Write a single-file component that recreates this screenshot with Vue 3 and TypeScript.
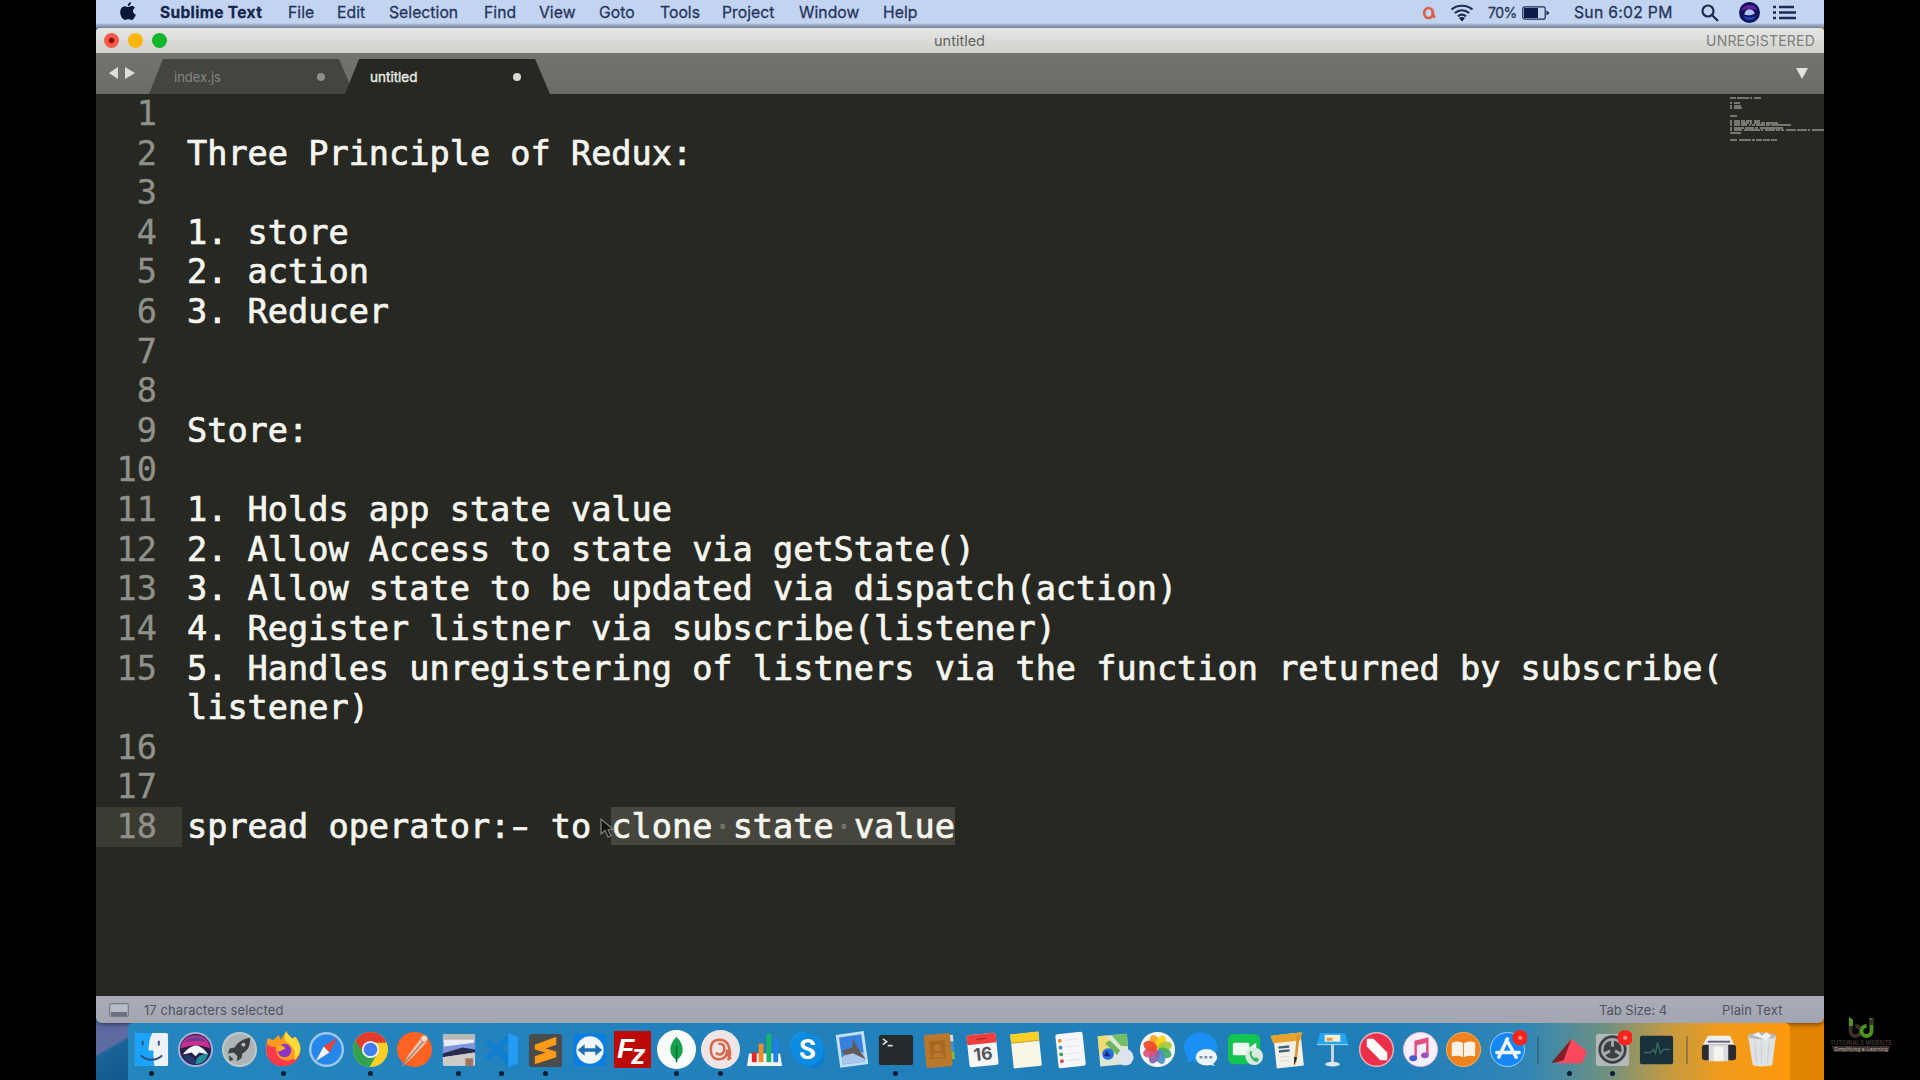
<script setup lang="ts">
interface MenuItem { label: string; width: number; gap: number }
interface DockIcon { name: string; art: string; running?: boolean; dividerAfter?: boolean }

const menu: MenuItem[] = [
  { label: 'File', width: 27, gap: 22 },
  { label: 'Edit', width: 30, gap: 22 },
  { label: 'Selection', width: 73, gap: 22 },
  { label: 'Find', width: 33, gap: 22 },
  { label: 'View', width: 38, gap: 22 },
  { label: 'Goto', width: 39, gap: 22 },
  { label: 'Tools', width: 40, gap: 22 },
  { label: 'Project', width: 55, gap: 22 },
  { label: 'Window', width: 63, gap: 21 },
  { label: 'Help', width: 37, gap: 0 },
]

const rows: { no: string; text: string }[] = [
  { no: '1', text: '' },
  { no: '2', text: 'Three Principle of Redux:' },
  { no: '3', text: '' },
  { no: '4', text: '1. store' },
  { no: '5', text: '2. action' },
  { no: '6', text: '3. Reducer' },
  { no: '7', text: '' },
  { no: '8', text: '' },
  { no: '9', text: 'Store:' },
  { no: '10', text: '' },
  { no: '11', text: '1. Holds app state value' },
  { no: '12', text: '2. Allow Access to state via getState()' },
  { no: '13', text: '3. Allow state to be updated via dispatch(action)' },
  { no: '14', text: '4. Register listner via subscribe(listener)' },
  { no: '15', text: '5. Handles unregistering of listners via the function returned by subscribe(' },
  { no: '', text: 'listener)' },
  { no: '16', text: '' },
  { no: '17', text: '' },
]
const mapRows: string[][] = [...rows.map(r => r.text), 'spread operator:- to clone state value'].map(t => t.split(' '))

const petals = ['#f9a51a', '#f7d417', '#a4c93a', '#3fae6b', '#4a90c9', '#8a63a9', '#d9527c', '#ee4b2b']
  .map((c, i) => `<ellipse cx="20" cy="12" rx="5" ry="7.5" fill="${c}" opacity=".92" transform="rotate(${i * 45 - 20} 20 20)"/>`)
  .join('')

const badge = '<circle cx="33" cy="8" r="8" fill="#f8251c"/><circle cx="33" cy="8" r="2.2" fill="#ff8d84"/>'

const dock: DockIcon[] = [
  { name: 'Finder', running: true, art: '<rect x="3" y="3" width="34" height="34" rx="2" fill="#eef1f6"/><path d="M5 3h16c-3 5-4 11-4 18h5c0 6 0 11 1 16H5a2 2 0 0 1-2-2V5a2 2 0 0 1 2-2z" fill="#1ba3fb"/><path d="M11 11v5M27.500 11v5" stroke="#35567c" stroke-width="2"/><path d="M9 26c6 6 16 6 22 0" fill="none" stroke="#2a4f7c" stroke-width="2"/>' },
  { name: 'Siri', art: '<circle cx="20" cy="20" r="18" fill="#9fb0da"/><circle cx="20" cy="20" r="16" fill="#2b1d45"/><path d="M5 19C6 1 34 1 35 19c-9-4-20-4-30 0z" fill="#c72f8c"/><path d="M9 12c5-6 17-6 22 0-6-1-16-1-22 0z" fill="#6b3a94"/><path d="M7 25c4-5 9-9 14-9 5 1 9 5 12 9l-9-2-4 4-4-4z" fill="#eefcff"/><path d="M20 35c0-6 3-10 13-11-1 6-6 11-13 11z" fill="#1b8f9b"/><path d="M20 35c0-6-3-10-13-10 2 6 6 10 13 10z" fill="#243a6b"/>' },
  { name: 'Launchpad', art: '<circle cx="20" cy="20" r="18" fill="#c2c8ca"/><circle cx="20" cy="20" r="16" fill="#adb4b5"/><path d="M31 8c-8 1-13 5-16 10l-5 1-2 5 6-1 4 4-1 5 5-3 1-5c6-3 8-8 8-16z" fill="#3b3f44"/><circle cx="24" cy="15" r="2" fill="#b9c0c5"/><path d="M9 26l5 4-4 2z" fill="#3b3f44"/>' },
  { name: 'Firefox', running: true, art: '<path d="M4 8c2 2 4 2 6 2l5-5 2 5 6-9c1 4 4 5 6 8l3-2c4 5 6 10 5 15-2 9-9 15-17 15S3 30 2 22c0-5 1-10 2-14z" fill="#ff9a1f"/><path d="M3 14C0 30 10 38 20 37c8 0 15-5 17-13-5 6-11 8-16 7-8-2-9-9-9-14-3 1-6 0-9-3z" fill="#fb3b4c"/><path d="M23 1c1 4 4 5 6 8l3-2c4 5 6 10 5 15-1 4-3 7-6 9 2-9-1-15-8-19-3-3-2-7 0-11z" fill="#ffdb3a"/><circle cx="21" cy="21" r="7" fill="#8a35c4"/><path d="M12 17c4-3 9-1 10 2l-6 3c-3 0-4-2-4-5z" fill="#ffad26"/>' },
  { name: 'Safari', art: '<circle cx="20" cy="20" r="18" fill="#9cc6f2"/><circle cx="20" cy="20" r="15.5" fill="#2787e8"/><path d="M31 8L17 17l6 6z" fill="#f14338"/><path d="M9 32l8-15 6 6z" fill="#f2f4f5"/>' },
  { name: 'Chrome', running: true, art: '<circle cx="20" cy="20" r="18" fill="#fdcf25"/><path d="M4.4 11A18 18 0 0 1 35.6 11L36 13H20L12 24z" fill="#e33b2e"/><path d="M4.4 11A18 18 0 0 0 19 38l8-14-14 0z" fill="#31a350"/><circle cx="20" cy="20" r="8.8" fill="#f2f3ee"/><circle cx="20" cy="20" r="7" fill="#3f7df0"/>' },
  { name: 'Postman', art: '<circle cx="20" cy="20" r="18" fill="#ff6221"/><path d="M7 38l7-13L27 8l6 4-14 15z" fill="#efc3aa"/><path d="M8 36l21-24" stroke="#a8735b" stroke-width="1.3"/><circle cx="30" cy="9" r="3.500" fill="#f5d9ca" stroke="#c98666"/>' },
  { name: 'Scanner', running: true, art: '<rect x="4" y="4" width="33" height="33" rx="2" fill="#c8cbd6"/><path d="M4 4h33v7H4z" fill="#b7b9b4"/><path d="M4 12l33-2v10L4 24z" fill="#7f98dc"/><path d="M5 10h31v3L5 17z" fill="#e9edf7"/><path d="M4 24l20-6 13 2v3L4 28z" fill="#272d50"/><path d="M4 28l32-5v13H4z" fill="#cfcbc6"/><path d="M27 29h8v8h-8z" fill="#a07562"/>' },
  { name: 'Visual Studio Code', running: true, art: '<path d="M27 3l10 4v27l-10 4L15 25l-8 6-4-3 8-8-8-7 4-3 8 6zM28 12l-7 8 7 8z" fill="#117fd0"/><path d="M27 3l10 4v27l-10 4z" fill="#259cf4"/>' },
  { name: 'Sublime Text', running: true, art: '<rect x="3" y="4" width="34" height="34" rx="3" fill="#4a4b4b"/><path d="M9 15l22-8v8l-11 4 11 3v6L9 35v-8l11-4-11-3z" fill="#fd9a16"/>' },
  { name: 'TeamViewer', art: '<rect x="4" y="4" width="33" height="33" rx="3" fill="#087de4"/><circle cx="20.500" cy="20.500" r="14" fill="#f2f7fc"/><path d="M8 20.500l7-6v4.300h11v-4.300l7 6-7 6v-4.300H15v4.300z" fill="#1f6db5"/>' },
  { name: 'FileZilla', art: '<rect x="1" y="1" width="38" height="38" rx="1" fill="#bd0a07"/><text x="4" y="29" font-size="29" font-weight="bold" font-style="italic" font-family="Liberation Sans, sans-serif" fill="#fff">F<tspan dx="-3" dy="6">z</tspan></text>' },
  { name: 'MongoDB Compass', running: true, art: '<circle cx="20" cy="20" r="20" fill="#fafcfb"/><path d="M20 7c9 9 8 19 0 24-8-5-9-15 0-24z" fill="#14a04c"/><path d="M20 16v17" stroke="#0a6b35" stroke-width="1.600"/>' },
  { name: 'Recorder', running: true, art: '<circle cx="20" cy="20" r="20" fill="#eee5e6"/><path d="M16 24c5 3 8-1 8-5 0-3-2-5-5-5M28 30c2-3 2-7 1-11-1-6-5-9-10-9-6 0-9 4-9 10s3 10 8 10c6 0 9-4 9-10 0 4 1 7 3 9" fill="none" stroke="#d9694e" stroke-width="2.600" stroke-linecap="round"/>' },
  { name: 'Numbers', art: '<path d="M4 24h32l2 13H2z" fill="#f3f3fa"/><path d="M7 23h5v10H7z" fill="#e9262a"/><path d="M14 14h5v19h-5z" fill="#ef8d26"/><path d="M22 4h5v29h-5z" fill="#18b56b"/><path d="M29 9h5v24h-5z" fill="#1b83e8"/>' },
  { name: 'Skype', art: '<circle cx="15" cy="15" r="13" fill="#0d92e8"/><circle cx="25" cy="26" r="13" fill="#087bd4"/><circle cx="20" cy="20" r="16.500" fill="#0d8be2"/><text x="20" y="30" text-anchor="middle" font-size="28" font-weight="bold" font-family="Roboto, sans-serif" fill="#fff">S</text>' },
  { name: 'Mail', art: '<g transform="rotate(-8 20 20)"><rect x="6" y="3" width="29" height="34" fill="#bfe0f7"/><rect x="9" y="6" width="23" height="28" fill="#3780dd"/><path d="M9 27c8-6 15-6 23-2v9H9z" fill="#a8c6ea"/><path d="M10 20l11-2 2-9 3 9 7 14-12-8-8 1z" fill="#635b57"/></g>' },
  { name: 'Terminal', running: true, art: '<rect x="3" y="5" width="35" height="31" rx="2" fill="#252a2d"/><path d="M7 9l4 3-4 3M12 16h5" fill="none" stroke="#d9dcdc" stroke-width="1.600"/>' },
  { name: 'Contacts', art: '<g transform="rotate(-5 20 20)"><path d="M31 6h4v7h-4z" fill="#d5dbe0"/><path d="M31 14h4v8h-4z" fill="#4a8ed0"/><path d="M31 23h4v8h-4z" fill="#86b640"/><rect x="5" y="4" width="27" height="34" rx="2" fill="#b9772c"/><path d="M10 11h16v18H10z" fill="#a9671f"/><circle cx="18" cy="18" r="3.500" fill="#b47933"/><path d="M12 28c0-6 12-6 12 0z" fill="#b47933"/></g>' },
  { name: 'Calendar', art: '<g transform="rotate(-6 20 20)"><rect x="5" y="4" width="30" height="33" rx="2" fill="#f6f6f6"/><path d="M7 4h26a2 2 0 0 1 2 2v8H5V6a2 2 0 0 1 2-2z" fill="#ee3f3c"/><path d="M15 9h10" stroke="#b92828" stroke-width="1.500"/><text x="20" y="31" text-anchor="middle" font-size="18" font-weight="bold" font-family="Inter, sans-serif" fill="#53565a">16</text></g>' },
  { name: 'Notes', art: '<g transform="rotate(-6 20 20)"><rect x="5" y="3" width="29" height="35" rx="1" fill="#f8f6e7"/><path d="M5 3h29v9H5z" fill="#fad027"/><path d="M5 12h29" stroke="#c5a233"/></g>' },
  { name: 'Reminders', art: '<g transform="rotate(-6 20 20)"><rect x="6" y="3" width="28" height="35" rx="2" fill="#f5f6fa"/><circle cx="10" cy="10" r="2" fill="#f28927"/><circle cx="10" cy="17" r="2" fill="#318ac9"/><circle cx="10" cy="24" r="2" fill="#3aa14b"/><circle cx="10" cy="31" r="2" fill="#e34650"/><path d="M15 10h14M15 17h14M15 24h14M15 31h14" stroke="#e1e2e8"/></g>' },
  { name: 'Maps', art: '<g transform="rotate(-5 20 20)"><rect x="4" y="5" width="30" height="31" fill="#dde7d3"/><path d="M4 5h9l4 10-13 9z" fill="#eedb74"/><path d="M18 5h16v13l-7-1z" fill="#73bd65"/><path d="M16 10l11 13-4 4-12-14z" fill="#6fb45c"/><circle cx="13" cy="24" r="6" fill="#276fdd"/></g><circle cx="31" cy="28" r="8.500" fill="#dce5ef"/><path d="M12 21l4 6h-7z" fill="#1a2e84"/>' },
  { name: 'Photos', art: `<circle cx="20" cy="20" r="18" fill="#f8f7f3"/>${petals}` },
  { name: 'Messages', art: '<ellipse cx="19" cy="18" rx="17" ry="15.500" fill="#1a90f5"/><path d="M7 27l-2 7 9-4z" fill="#1a90f5"/><ellipse cx="25" cy="28" rx="11" ry="8.500" fill="#edf4fb"/><path d="M30 33l4 4-7-2z" fill="#edf4fb"/><path d="M18 28h13" stroke="#7e91ac" stroke-width="2.500" stroke-dasharray="3 2"/>' },
  { name: 'FaceTime', art: '<rect x="2" y="4" width="33" height="31" rx="6" fill="#14c453"/><rect x="7" y="13" width="17" height="13" rx="2" fill="#eefaf0"/><path d="M24 18l7-5v12l-7-4z" fill="#eefaf0"/><circle cx="29" cy="27" r="9" fill="#dbe9e2"/><path d="M24 24c1 5 4 8 8 9l2-3-3-2-2 1-3-4 1-2-2-2z" fill="#31b967"/>' },
  { name: 'Pages', art: '<g transform="rotate(-6 20 20)"><rect x="6" y="4" width="28" height="34" fill="#f3f0e8"/><path d="M3 4h33l-3 8H5z" fill="#e7a42c"/><path d="M10 17h11M10 21h11" stroke="#3e6072" stroke-width="2.500"/><path d="M10 27h10M10 31h10" stroke="#dcdad2"/><path d="M30 6l3 1-6 26-3 4 1-6z" fill="#dc922f"/><path d="M25 28l3 1-4 8z" fill="#222b36"/></g>' },
  { name: 'Keynote', art: '<path d="M7 3h26l3 12H4z" fill="#25a5f0"/><path d="M12 5h16v7H12z" fill="#f7eed5"/><path d="M14 8h6v3h-6z" fill="#dc9b44"/><path d="M18.500 15h3v18h-3z" fill="#ccd5e2"/><path d="M4 15h32" stroke="#a7deff"/><ellipse cx="20" cy="35" rx="7.500" ry="2.500" fill="#e3e6ef"/>' },
  { name: 'News', art: '<circle cx="20" cy="20" r="18" fill="#e8b3c0"/><circle cx="20" cy="20" r="16.500" fill="#ec3049"/><path d="M10 9h7l14 14v8h-7L10 17z" fill="#fffafa"/>' },
  { name: 'iTunes', art: '<circle cx="20" cy="20" r="17.500" fill="#f5effa" stroke="#eeb7d1"/><path d="M15 29V12l12-3v17" fill="none" stroke="#e64f80" stroke-width="2.500"/><path d="M15 14l12-3" stroke="#e64f80" stroke-width="4"/><ellipse cx="12.500" cy="29" rx="4" ry="3" fill="#445bd4"/><ellipse cx="24.500" cy="26" rx="4" ry="3" fill="#9b53c4"/>' },
  { name: 'Books', art: '<circle cx="20" cy="20" r="17.500" fill="#f0821d" stroke="#f5b264"/><path d="M8 13c5-2 9-1 12 1v14c-3-2-7-2-12-1zM32 13c-5-2-9-1-12 1v14c3-2 7-2 12-1z" fill="#fbf3e6"/><path d="M20 14v14" stroke="#df8a39"/>' },
  { name: 'App Store', dividerAfter: true, art: `<circle cx="20" cy="20" r="17.500" fill="#1687f7" stroke="#a2cef6"/><path d="M20 9L11 28M19 10l10 18M9 23h23" fill="none" stroke="#f2f8ff" stroke-width="3.500" stroke-linecap="round"/>${badge}` },
  { name: 'Build tool', running: true, art: '<path d="M2 33L22 10l-2 20z" fill="#3d1114"/><path d="M22 9l16 13-5 12-26 0z" fill="#fb4a5d"/><path d="M22 9L2 34l12-3z" fill="#871d25"/>' },
  { name: 'System Preferences', running: true, art: `<rect x="3" y="4" width="34" height="33" rx="3" fill="#b5b8bb"/><circle cx="20" cy="20" r="14.500" fill="#3a4044"/><circle cx="20" cy="20" r="10.500" fill="none" stroke="#a6a9aa" stroke-width="2.500"/><path d="M20 20V10M20 20l9 5M20 20l-9 5" stroke="#a6a9aa" stroke-width="3"/><circle cx="20" cy="20" r="3" fill="#3a4044"/>${badge}` },
  { name: 'Activity Monitor', dividerAfter: true, art: '<rect x="3" y="6" width="34" height="29" rx="2" fill="#173039"/><path d="M7 23h7l3-3 2 4 2-11 3 11 3-4h7" fill="none" stroke="#38685f" stroke-width="1.500"/>' },
  { name: 'Printer', art: '<path d="M9 6h23l4 9H4z" fill="#f1eef2"/><path d="M9 12h23" stroke="#68647b" stroke-width="2"/><rect x="3" y="15" width="35" height="16" rx="3" fill="#2b2c31"/><path d="M10 15h20v17H10z" fill="#d9dbdc"/><path d="M15 17h10v15H15z" fill="#f4f3f0"/>' },
  { name: 'Trash', art: '<path d="M6 5h29l-4 31c-5 2-16 2-20 0z" fill="#dfe1e2"/><ellipse cx="20.500" cy="6" rx="14.500" ry="3.500" fill="#b4b6b8"/><path d="M11 5l6-3 3 4 5-4 5 4-5 5-6-3z" fill="#eef0f1"/><path d="M13 12l2 22M20 12v22M28 12l-2 22" stroke="#d0d3d6" stroke-width="1.500"/>' },
]
</script>

<template>
  <main class="stage">
    <div class="side" />
    <section class="desktop">
      <header class="menubar">
        <svg class="apple" viewBox="0 0 16 19"><path d="M11 0c.2 2-1.300 4-3.200 4C7.600 2 9.200.3 11 0zM8.200 5c1 0 2-.9 3.500-.9 1.400 0 2.600.7 3.300 1.700-3 1.800-2.400 5.700.8 6.900-1 3-2.700 5.300-4.300 5.300-1.200 0-1.700-.7-3.100-.7s-2 .7-3.100.7C2.800 18 .2 14 .2 10.200c0-3.800 2.300-6 4.700-6C6.400 4.200 7.300 5 8.200 5z" /></svg>
        <b class="appname">Sublime Text</b>
        <span v-for="m in menu" :key="m.label" class="menu-item" :style="{ width: m.width + 'px', marginRight: m.gap + 'px' }">{{ m.label }}</span>
        <div class="tray">
          <svg class="rec" viewBox="0 0 14 14"><ellipse cx="6.500" cy="7" rx="4.300" ry="5" /><path d="M10 3.500c.8 3 1.200 6 2.500 8.500" /></svg>
          <svg class="wifi" viewBox="0 0 24 18"><path d="M1.500 5.500c6-5 15-5 21 0M4.800 9c4.300-3.500 10-3.500 14.400 0M8 12.300c2.400-1.900 5.600-1.900 8 0" /><path class="fill" d="M9 14c2-1.300 4-1.300 6 0l-3 3.500z" /></svg>
          <span class="pct">70%</span>
          <svg class="battery" viewBox="0 0 28 14"><rect x=".8" y=".8" width="22.400" height="12.400" rx="2" /><path class="fill" d="M2 2h14v10H2zM24.500 4.500L27.500 7l-3 2.500z" /></svg>
          <span class="clock">Sun 6:02 PM</span>
          <svg class="search" viewBox="0 0 18 18"><circle cx="7" cy="7" r="5.500" /><path d="M11 11l6 6" /></svg>
          <svg class="siri" viewBox="0 0 20 20"><circle cx="10" cy="10" r="10" fill="#10145c" /><path d="M2.500 8C4 1 16 1 17.500 8c-4-2-11-2-15 0z" fill="#6a1fa0" /><path d="M5 12c1-6 8-7 10-1-3 2-7 2-10 1z" fill="#b5c4ff" /><path d="M4 13c4 2 9 2 12 0-2 5-9 6-12 0z" fill="#1746c4" /></svg>
          <svg class="list" viewBox="0 0 23 15"><path d="M0 2h3M0 7.500h3M0 13h3M6 2h15M6 7.500h17M6 13h17" /></svg>
        </div>
      </header>

      <section class="window">
        <div class="titlebar">
          <div class="lights"><i class="red" /><i class="amber" /><i class="green" /></div>
          <span class="title">untitled</span>
          <span class="unreg">UNREGISTERED</span>
        </div>
        <div class="tabbar">
          <svg class="nav" viewBox="0 0 28 14"><path d="M10 1v12L1 7zM17 1v12l10-6z" /></svg>
          <div class="tab"><span>index.js</span><i /></div>
          <div class="tab active"><span>untitled</span><i /></div>
          <svg class="drop" viewBox="0 0 12 11"><path d="M0 0h12L6 11z" /></svg>
        </div>
        <div class="editor">
          <div class="code">
            <div v-for="(r, i) in rows" :key="i" class="row"><span class="no">{{ r.no }}</span><span class="text">{{ r.text }}</span></div>
            <div class="row current">
              <span class="no">18</span>
              <span class="text">spread operator:<span class="dash">-</span> to <mark>clone<u>·</u>state<u>·</u>value</mark></span>
              <svg class="pointer" viewBox="0 0 14 20"><path d="M1 1v15l4-3.500L8 19l3-1.300-3-6 5-.4z" /></svg>
            </div>
          </div>
          <div class="minimap">
            <div v-for="(words, i) in mapRows" :key="i" class="map-row">
              <i v-for="(w, j) in words" :key="j" :style="{ width: w.length * 1.24 + 'px' }" />
            </div>
          </div>
        </div>
        <footer class="status">
          <svg class="panel" viewBox="0 0 20 14"><rect x=".7" y=".7" width="18.600" height="12.600" rx="1.500" /><path d="M2 9h16v4H2z" /></svg>
          <span class="sel">17 characters selected</span>
          <span class="tabsize">Tab Size: 4</span>
          <span class="syntax">Plain Text</span>
        </footer>
      </section>

      <nav class="dock">
        <template v-for="d in dock" :key="d.name">
          <div class="tile">
            <svg viewBox="0 0 40 40" :aria-label="d.name" v-html="d.art" />
            <i v-if="d.running" />
          </div>
          <div v-if="d.dividerAfter" class="divider" />
        </template>
      </nav>
    </section>
    <aside class="side right">
      <div class="brand">
        <svg viewBox="0 0 26 22"><path d="M2.500 1v13a5 5 0 1 0 5-5" stroke="#3b302d" /><path d="M1 0l4 3v6H1z" fill="#4d941f" stroke="none" /><path d="M23.500 1v13a5 5 0 1 1-5-5" stroke="#4d941f" /><path d="M21.500 4L25 0v8h-3.500z" fill="#3b302d" stroke="none" /></svg>
        <span class="name">TUTORIALS WEBSITE</span>
        <span class="slogan">Simplifying e-Learning</span>
      </div>
    </aside>
  </main>
</template>

<style>
body { background: #000; overflow: hidden; }
</style>

<style scoped>
* { box-sizing: border-box; }
.stage { display: flex; width: 1920px; height: 1080px; background: #000; font-family: Inter, sans-serif; overflow: hidden; }
.side { width: 96px; flex: none; }
.desktop {
  width: 1728px; height: 1080px; flex: none; display: flex; flex-direction: column; overflow: hidden;
  background:
    linear-gradient(150deg, #5a6aa0 0, #5d6ca2 28px, #1b6499 31px, #11598f 60px) 0 100% / 40px 58px no-repeat,
    linear-gradient(90deg, #2b7fb5 0, #2b7fb5 1480px, #d98a10 1620px, #e28200 1728px);
}
.menubar { height: 28px; flex: none; display: flex; align-items: center; padding: 0 28px 3px 24px; background: linear-gradient(#c2d4f0 0 23px, #9dacc4 25px, #8b99b0 28px); color: #26355c; font-size: 15.700px; line-height: 24px; white-space: nowrap; -webkit-text-stroke: .3px #26355c; }
.apple { width: 16px; height: 19px; fill: #0b1739; margin-right: 24px; flex: none; margin-top: -3px; }
.appname { width: 106px; margin-right: 22px; font-size: 15.500px; letter-spacing: .35px; color: #13234c; }
.menu-item { flex: none; letter-spacing: .05px; }
.tray { display: flex; align-items: center; margin-left: auto; }
.tray svg { flex: none; fill: none; stroke: #1a2b55; stroke-width: 2.200; }
.tray svg .fill { fill: #0c1d48; stroke: none; }
.tray .rec { width: 14px; height: 14px; stroke: #dc5f4a; stroke-width: 2.600; margin-right: 14px; }
.tray .wifi { width: 24px; height: 18px; margin-right: 14px; }
.pct { width: 30px; font-size: 14px; letter-spacing: -.5px; margin-right: 4px; }
.tray .battery { width: 28px; height: 14px; stroke-width: 1.200; margin-right: 24px; }
.clock { width: 100px; margin-right: 27px; letter-spacing: .3px; }
.tray .search { width: 18px; height: 18px; margin-right: 20px; }
.tray .siri { width: 21px; height: 21px; stroke: none; margin-right: 13px; }
.tray .list { width: 23px; height: 15px; stroke-width: 2.600; }

.window { height: 995px; flex: none; display: flex; flex-direction: column; border-radius: 4px 4px 6px 6px; overflow: hidden; box-shadow: 0 1px 5px rgba(0, 0, 30, .55); }
.titlebar { height: 25px; flex: none; display: grid; grid-template-columns: 1fr auto 1fr; align-items: center; padding: 0 9px 1px 8px; background: linear-gradient(#e6e6e5, #d0d0cc); color: #62625f; font-size: 14.500px; }
.lights { display: flex; gap: 9px; }
.lights i { width: 15px; height: 15px; border-radius: 50%; }
.red { background: radial-gradient(circle, #8d0800 0 2px, #f25a49 3.500px); }
.amber { background: #fdb60d; }
.green { background: #12b52c; }
.unreg { text-align: right; font-size: 14px; letter-spacing: .2px; color: #7d7d7b; }
.tabbar { height: 41px; flex: none; display: flex; align-items: flex-end; background: linear-gradient(#73736f, #6b6c67); padding: 0 16px 0 12px; }
.nav { width: 28px; height: 14px; margin: 0 13px 14px 0; fill: #dededa; }
.tab { width: 207px; height: 35px; flex: none; display: flex; align-items: center; justify-content: space-between; padding: 0 31px 0 25px; background: #444540; color: #85867f; font-size: 13px; clip-path: polygon(14px 0, 190px 0, 205px 100%, 0 100%); }
.tab i { width: 8px; height: 8px; border-radius: 50%; background: #8d8e88; }
.tab.active { margin-left: -11px; background: #272822; color: #e8e8e2; font-size: 13.500px; -webkit-text-stroke: .4px #e8e8e2; }
.tab.active i { background: #d9d9d2; }
.drop { width: 12px; height: 11px; margin: 0 0 15px auto; fill: #e2e2de; }
.editor { flex: 1; position: relative; background: #272822; overflow: hidden; }
.code { font: 33.570px/39.600px "DejaVu Sans Mono", monospace; color: #f6f6f0; }
.row { display: flex; height: 39.620px; white-space: pre; position: relative; }
.no { width: 86px; padding-right: 25px; text-align: right; flex: none; color: #90918b; -webkit-text-stroke: .3px #90918b; }
.text { padding-left: 5px; -webkit-text-stroke: .7px #f6f6f0; }
.dash { display: inline-block; transform: scaleX(1.5); }
.current .no { background: #3c3b31; }
mark { display: inline-block; height: 38px; line-height: 39.600px; background: #47463e; color: inherit; }
u { text-decoration: none; color: #74736a; -webkit-text-stroke: 0; }
.pointer { position: absolute; left: 504px; top: 11px; width: 14px; height: 20px; fill: #11120f; stroke: #85857c; stroke-width: 1.200; }
.minimap { position: absolute; left: 1634px; top: 1px; width: 94px; overflow: hidden; }
.map-row { height: 2.460px; display: flex; gap: 1.240px; }
.map-row i { height: 2px; background: #8b8c84; opacity: .8; flex: none; }
.status { height: 27px; flex: none; display: flex; align-items: center; padding: 0 41px 0 13px; background: linear-gradient(#a9acb8, #a3a6b1); color: #50535d; font-size: 13px; white-space: nowrap; }
.panel { width: 20px; height: 14px; margin-right: 15px; fill: #b7bdc6; stroke: #737c88; stroke-width: 1.200; }
.panel path { fill: #68717d; stroke: none; }
.sel { letter-spacing: .08px; }
.tabsize { margin-left: auto; width: 68px; margin-right: 55px; }
.syntax { width: 61px; letter-spacing: .1px; }

.dock { flex: 1; width: 1662px; margin-left: 32px; padding-left: 2px; display: flex; border-radius: 5px 5px 0 0; background: linear-gradient(90deg, #2585bd 0, #1f7db8 1250px, #3286b5 1400px, #6c9083 1475px, #bd9a46 1535px, #f09b1c 1590px, #fc990c 1662px); }
.tile { width: 43.740px; flex: none; display: flex; flex-direction: column; align-items: center; padding-top: 7px; }
.tile svg { width: 39px; height: 39px; flex: none; }
.tile i { width: 5px; height: 5px; border-radius: 50%; background: #071c35; margin-top: 2px; }
.divider { width: 1.500px; height: 28px; margin: 13px 8.500px 0 7.800px; background: rgba(40, 60, 80, .35); }

.right { flex: 1; display: flex; align-items: flex-end; }
.brand { width: 74px; height: 66px; display: flex; flex-direction: column; align-items: center; }
.brand svg { width: 26px; height: 22px; margin-top: 3px; fill: none; stroke-width: 3.800; }
.name { font: bold 6px/7px Inter, sans-serif; letter-spacing: -.05px; color: #3a302e; white-space: nowrap; }
.slogan { width: 58px; font: 5px/6px Inter, sans-serif; color: #b9aaa6; background: #3b302e; text-align: center; white-space: nowrap; clip-path: polygon(0 0, 100% 0, 97% 100%, 3% 100%); }
</style>
